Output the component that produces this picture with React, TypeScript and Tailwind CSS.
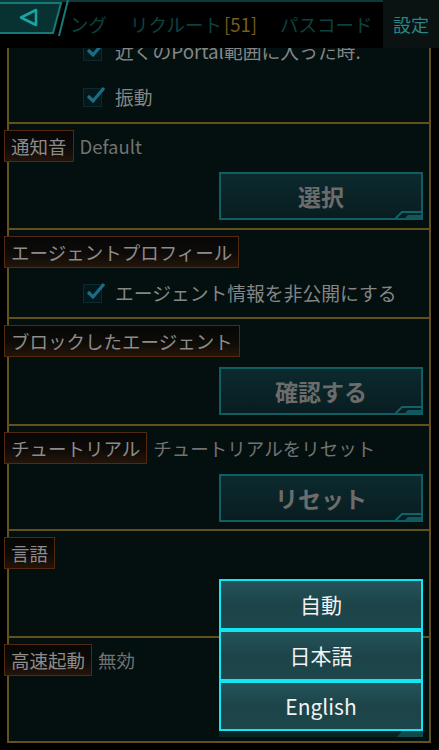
const font = "font-['Noto_Sans_CJK_JP','Noto_Sans',sans-serif]"

function CheckRow({ label, className = '' }: { label: string; className?: string }) {
  return (
    <div className={`flex h-[24px] items-center ${className}`}>
      <div className="relative ml-[74px] h-[19px] w-[19px] shrink-0 border border-[#0b2a2f] bg-[#04171a]">
        <svg className="absolute -top-[4px] left-[1px]" width="22" height="20" viewBox="0 0 22 20">
          <path d="M3 11 L8 16 L19 3" fill="none" stroke="#1b6d86" strokeWidth="3.2" />
        </svg>
      </div>
      <span className="ml-[13px] whitespace-nowrap text-[18.8px] leading-none text-[#858585]">{label}</span>
    </div>
  )
}

function Label({ text, note }: { text: string; note?: string }) {
  return (
    <div className="-ml-[5px] flex items-center">
      <div className="flex h-[32px] items-center border border-[#55290f] bg-[linear-gradient(to_bottom,#060706,#0d0b08_55%,#24150a)] px-[6px]">
        <span className="whitespace-nowrap text-[18.5px] leading-none text-[#8c8c8c]">{text}</span>
      </div>
      {note && <span className="ml-[6px] whitespace-nowrap text-[18.5px] leading-none text-[#727272]">{note}</span>}
    </div>
  )
}

function Corner({ fill = '#0e5a5e' }: { fill?: string }) {
  return (
    <svg className="absolute -bottom-[2px] -right-[2px]" width="28" height="11" viewBox="0 0 28 11">
      <path d="M0 10 L7 3 L28 3" fill="none" stroke="#0f6468" strokeWidth="2" />
      <path d="M9 10 L13 6 L26 6 L26 10 Z" fill={fill} />
    </svg>
  )
}

function ActionButton({ text }: { text: string }) {
  return (
    <div className="relative mr-[6px] ml-auto mt-[10px] flex h-[48px] w-[204px] items-center justify-center border-2 border-[#0e5e62] bg-[linear-gradient(to_bottom,#0c2a2e,#081d21)]">
      <span className="text-[23px] font-semibold leading-none text-[#6c6c6c]">{text}</span>
      <Corner />
    </div>
  )
}

function Header() {
  return (
    <div className="flex h-[48px] items-start bg-black">
      <div className="relative h-[48px] w-[70px] shrink-0 border-t-2 border-[#0b3a3a]">
        <svg width="70" height="36" viewBox="0 0 70 36" className="absolute -top-[2px] left-0">
          <path d="M-1 3 L61 3 L53 33 L-1 33 Z" fill="#083232" stroke="#177a7a" strokeWidth="2" />
          <path d="M68 0 L59 36" fill="none" stroke="#177a7a" strokeWidth="2" />
          <path d="M21 17.5 L36 10 L36 25 Z" fill="none" stroke="#1aa3a2" strokeWidth="2.6" strokeLinejoin="round" />
        </svg>
      </div>
      <div className="flex h-[48px] flex-1 items-center border-t-2 border-[#0b3a3a] pb-[1px] text-[18.5px] leading-none text-[#0b4341]">
        <span className="whitespace-nowrap">ング</span>
        <span className="ml-[23px] whitespace-nowrap">リクルート</span>
        <span className="ml-[2px] whitespace-nowrap text-[#7a5d18]">[51]</span>
        <span className="ml-[23px] whitespace-nowrap">パスコード</span>
      </div>
      <div className="flex h-[48px] w-[56px] shrink-0 items-center justify-center bg-[#0a1212] pb-[1px]">
        <span className="text-[18px] leading-none text-[#2a8585]">設定</span>
      </div>
    </div>
  )
}

export default function App() {
  return (
    <div className={`h-[750px] w-[439px] overflow-hidden bg-black ${font}`}>
      <Header />
      <div className="ml-[7px] w-[424px] border-x-2 border-[#62501d] bg-[#03100f]">
        <section className="h-[76px] overflow-hidden border-b-2 border-[#62501d]">
          <CheckRow label="近くのPortal範囲に入った時." className="-mt-[9px]" />
          <CheckRow label="振動" className="mt-[22px]" />
        </section>

        <section className="h-[106px] border-b-2 border-[#62501d] pt-[6px]">
          <Label text="通知音" note="Default" />
          <ActionButton text="選択" />
        </section>

        <section className="h-[89px] border-b-2 border-[#62501d] pt-[6px]">
          <Label text="エージェントプロフィール" />
          <CheckRow label="エージェント情報を非公開にする" className="mt-[13px]" />
        </section>

        <section className="h-[107px] border-b-2 border-[#62501d] pt-[6px]">
          <Label text="ブロックしたエージェント" />
          <ActionButton text="確認する" />
        </section>

        <section className="h-[105px] border-b-2 border-[#62501d] pt-[6px]">
          <Label text="チュートリアル" note="チュートリアルをリセット" />
          <ActionButton text="リセット" />
        </section>

        <section className="relative h-[107px] border-b-2 border-[#62501d] pt-[6px]">
          <Label text="言語" />
          <div className="absolute right-[6px] top-[48px] z-10 w-[204px]">
            {['自動', '日本語', 'English'].map((t, i) => (
              <div
                key={t}
                className={`flex items-center justify-center border-2 border-[#12e6f2] bg-[linear-gradient(to_bottom,#24535a,#1c4449_50%,#1d474c)] ${i === 2 ? 'h-[50px]' : 'h-[51px]'}`}
              >
                <span className="text-[21px] leading-none text-[#f2f2f2]">{t}</span>
              </div>
            ))}
            <div className="relative h-[6px] bg-[#082326]">
              <svg className="absolute right-0 top-0" width="26" height="6" viewBox="0 0 26 6">
                <path d="M0 6 L5 0 L26 0 L26 6 Z" fill="#0d4a4e" />
              </svg>
            </div>
          </div>
        </section>

        <section className="h-[105px] border-b-2 border-[#62501d] pt-[6px]">
          <Label text="高速起動" note="無効" />
        </section>
      </div>
    </div>
  )
}
